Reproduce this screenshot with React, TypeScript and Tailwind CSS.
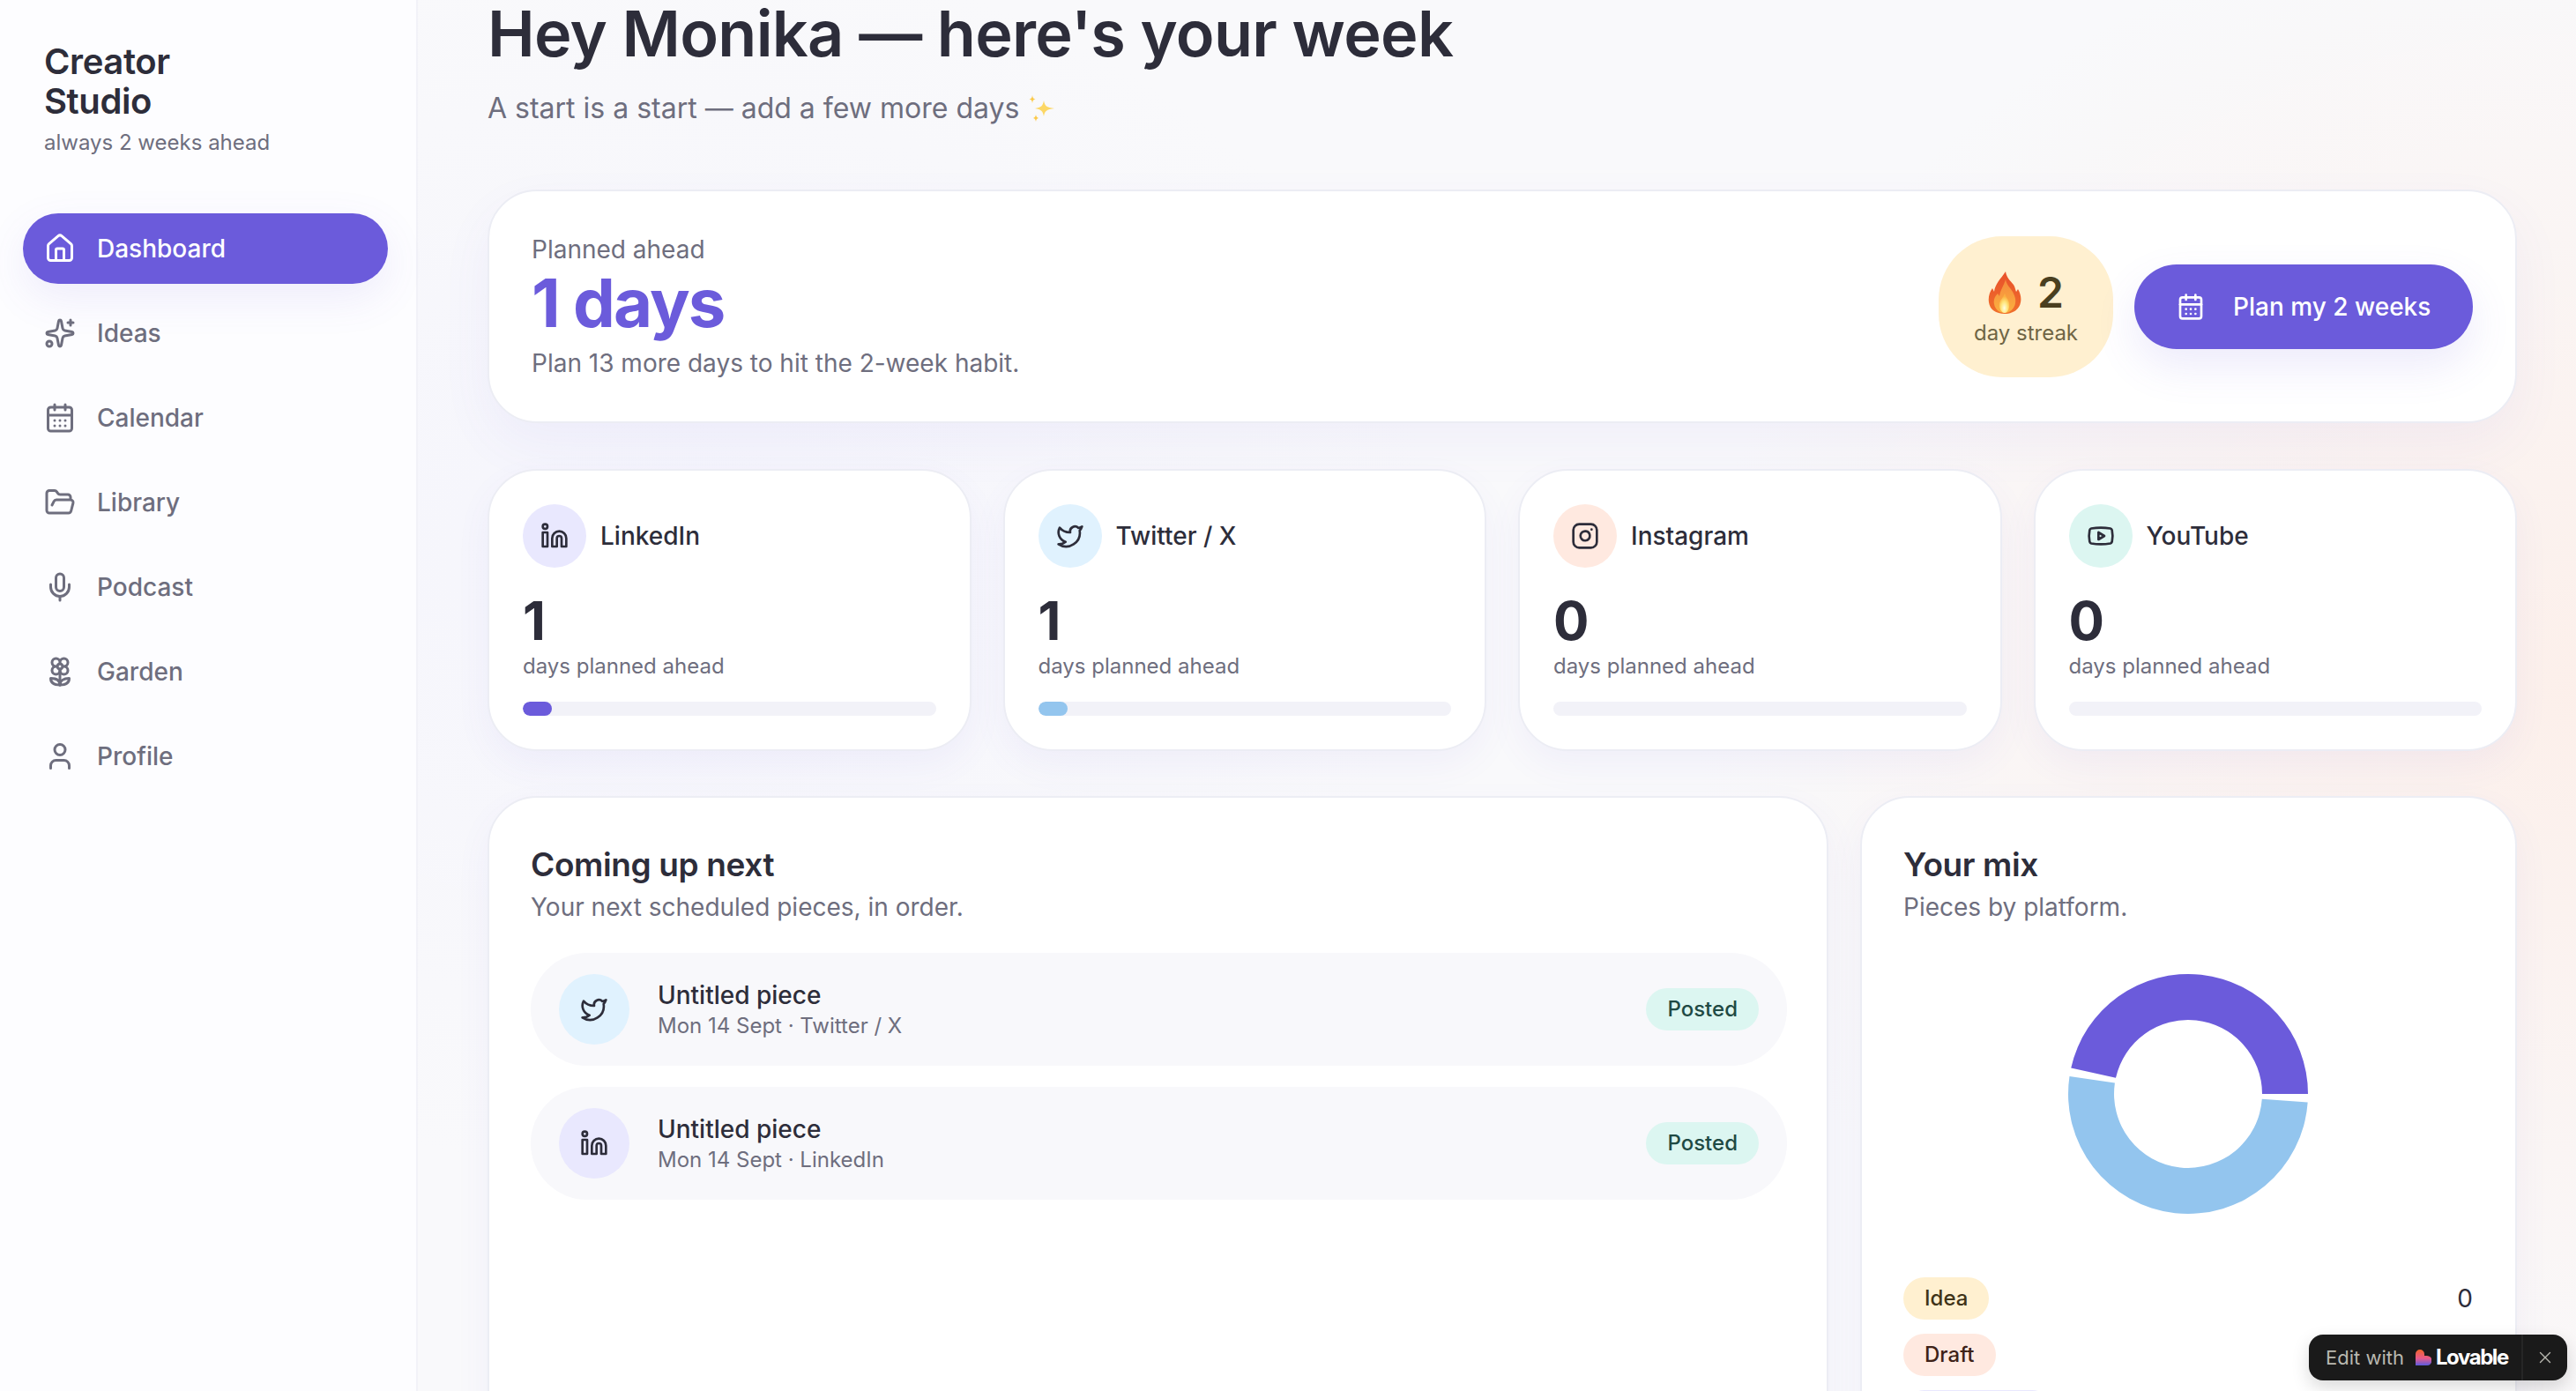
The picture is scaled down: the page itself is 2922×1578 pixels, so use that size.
import { CalendarDays, Flower2, FolderOpen, House, Instagram, Linkedin, Mic, Sparkles, Twitter, User, X, Youtube } from 'lucide-react';

const NAV = [
  { label: 'Dashboard', icon: House, active: true },
  { label: 'Ideas', icon: Sparkles },
  { label: 'Calendar', icon: CalendarDays },
  { label: 'Library', icon: FolderOpen },
  { label: 'Podcast', icon: Mic },
  { label: 'Garden', icon: Flower2 },
  { label: 'Profile', icon: User },
];

const PLATFORMS = [
  { name: 'LinkedIn', icon: Linkedin, tint: 'bg-[#e9e8fe]', count: 1, bar: 'bg-[#6b5bdb]' },
  { name: 'Twitter / X', icon: Twitter, tint: 'bg-[#e0f2fe]', count: 1, bar: 'bg-[#93c5ee]' },
  { name: 'Instagram', icon: Instagram, tint: 'bg-[#ffe9e0]', count: 0, bar: 'bg-[#6b5bdb]' },
  { name: 'YouTube', icon: Youtube, tint: 'bg-[#dcf6f1]', count: 0, bar: 'bg-[#6b5bdb]' },
];

const PIECES = [
  { meta: 'Mon 14 Sept · Twitter / X', icon: Twitter, tint: 'bg-[#e0f2fe]' },
  { meta: 'Mon 14 Sept · LinkedIn', icon: Linkedin, tint: 'bg-[#e9e8fe]' },
];

const MIX = [
  { label: 'Idea', tint: 'bg-[#fff0d0] text-[#3f3318]' },
  { label: 'Draft', tint: 'bg-[#ffe9e0] text-[#3e2218]' },
  { label: 'Scheduled', tint: 'bg-[#e9e8fe] text-[#2d2a55]' },
];

// angles go counter-clockwise from east, like the chart in the screenshot
function arc(from: number, to: number, r1: number, r2: number) {
  const pt = (a: number, r: number) => {
    const rad = (a * Math.PI) / 180;
    return `${(140 + r * Math.cos(rad)).toFixed(2)} ${(140 - r * Math.sin(rad)).toFixed(2)}`;
  };
  const large = to - from > 180 ? 1 : 0;
  return `M${pt(from, r1)}A${r1} ${r1} 0 ${large} 0 ${pt(to, r1)}L${pt(to, r2)}A${r2} ${r2} 0 ${large} 1 ${pt(from, r2)}Z`;
}

function Flame() {
  return (
    <svg viewBox="0 0 38 48" className="w-[38px] h-[48px] shrink-0">
      <defs>
        <linearGradient id="flameOuter" x1="0" y1="0" x2="0" y2="1">
          <stop offset="0" stopColor="#e8502a" />
          <stop offset="1" stopColor="#f0702c" />
        </linearGradient>
        <linearGradient id="flameInner" x1="0" y1="0" x2="0" y2="1">
          <stop offset="0" stopColor="#f58a3c" />
          <stop offset="1" stopColor="#fbb040" />
        </linearGradient>
        <radialGradient id="flameCore" cx="0.5" cy="0.75" r="0.6">
          <stop offset="0" stopColor="#fffde0" />
          <stop offset="0.55" stopColor="#ffe57a" />
          <stop offset="1" stopColor="#fbb040" />
        </radialGradient>
      </defs>
      <path d="M20 0c1 7 5 10 9 15 2 3 2 6 3 8l2-3c3 5 4 10 3 15-1 7-8 13-18 13S2 43 1 35c-1-6 1-12 4-16l2 4c1-9 7-14 13-23z" fill="url(#flameOuter)" />
      <path d="M20 9c1 6 5 9 8 14 2 4 4 8 3 13-1 6-6 11-12 11S8 43 7 37c-1-5 1-9 4-12l2 3c1-7 5-12 7-19z" fill="url(#flameInner)" />
      <path d="M19 25c1 4 4 6 5 10 1 5-1 12-5 12s-7-6-6-11c1-4 4-6 6-11z" fill="url(#flameCore)" />
    </svg>
  );
}

function Sparkle() {
  return (
    <svg viewBox="0 0 30 30" className="w-[30px] h-[30px] shrink-0">
      <path d="M18 6c1 6 3 8 12 9-9 1-11 3-12 9-1-6-3-8-10-9 7-1 9-3 10-9z" fill="#fcd765" />
      <path d="M5 0c.5 3 1 4 3.500 4.500C6 5 5.500 6 5 9c-.5-3-1-4-3.500-4.500C4 4 4.500 3 5 0z" fill="#fbc94a" />
      <path d="M9 22c.4 2.500 1 3 3 4-2 .5-2.600 1.500-3 4-.4-2.500-1-3.500-3-4 2-1 2.600-1.500 3-4z" fill="#fbc94a" />
    </svg>
  );
}

function LovableBadge() {
  return (
    <div className="absolute left-[2619px] top-[1514px] w-[293px] h-[52px] rounded-2xl bg-[#1a1a1a] flex items-center shadow-[0_8px_20px_rgba(0,0,0,0.15)]">
      <div className="flex items-center pl-[19px] w-[241px] shrink-0 whitespace-nowrap">
        <span className="text-[22px] leading-[32px] text-[#b9b8b0] shrink-0">Edit with</span>
        <svg viewBox="0 0 18 18" className="w-[18px] h-[18px] ml-[13px] shrink-0">
          <defs>
            <linearGradient id="lovable" x1="0" y1="0" x2="0" y2="1">
              <stop offset="0" stopColor="#f0642a" />
              <stop offset="0.55" stopColor="#e85a8a" />
              <stop offset="1" stopColor="#5a5be0" />
            </linearGradient>
          </defs>
          <path d="M0 5a5 5 0 0 1 10 0v2h3a5 5 0 0 1 0 11H0z" fill="url(#lovable)" />
        </svg>
        <span className="ml-[5px] text-[24px] leading-[32px] font-bold tracking-[-0.06em] text-white">Lovable</span>
      </div>
      <div className="h-full w-[2px] bg-[#262626]" />
      <div className="flex-1 flex items-center justify-center">
        <X className="w-[22px] h-[22px] text-[#b9b8b0]" strokeWidth={1.5} />
      </div>
    </div>
  );
}

export default function App() {
  return (
    <div className="relative w-[2922px] h-[1578px] overflow-hidden flex font-['Inter',sans-serif] text-[#2d2d3a] bg-[#f9f9fb] bg-[radial-gradient(ellipse_1000px_900px_at_100%_50%,rgba(255,230,218,0.5),transparent),radial-gradient(ellipse_900px_700px_at_25%_40%,rgba(236,236,255,0.3),transparent)]">
      {/* Sidebar */}
      <aside className="w-[474px] shrink-0 h-full bg-[#fdfdff] border-r-2 border-[#f2f2f8] pl-[26px] pr-[32px]">
        <div className="pl-[24px] pt-[47px]">
          <h2 className="text-[40px] leading-[45px] font-semibold tracking-[-0.01em]">Creator<br />Studio</h2>
          <p className="mt-[9px] text-[24px] leading-[32px] text-[#6e6e7e]">always 2 weeks ahead</p>
        </div>
        <nav className="mt-[64px] flex flex-col gap-4">
          {NAV.map(item => (
            <div key={item.label}
              className={`h-20 rounded-full flex items-center gap-6 pl-6 text-[28px] font-medium ${item.active ? 'bg-[#6b5bdb] text-white shadow-[0_16px_48px_rgba(107,91,219,0.10)]' : 'text-[#6e6e7e]'}`}>
              <item.icon className="w-9 h-9 shrink-0" />
              {item.label}
            </div>
          ))}
        </nav>
      </aside>

      {/* Main, scrolled down a little as in the screenshot */}
      <main className="flex-1 min-w-0 pl-[79px] pr-[67px]">
        <h1 className="-mt-[4px] text-[72px] leading-[84px] font-semibold tracking-[-0.01em] whitespace-nowrap">Hey Monika — here's your week</h1>
        <p className="mt-[19px] flex items-center gap-[10px] text-[32px] leading-[48px] text-[#6e6e7e]">
          A start is a start — add a few more days <Sparkle />
        </p>

        <section className="mt-[68px] h-[265px] rounded-[56px] bg-white border-2 border-[#ecedf4] shadow-[0_24px_60px_rgba(107,91,219,0.06)] flex items-center justify-between px-[48px]">
          <div>
            <p className="text-[28px] leading-[40px] text-[#6e6e7e]">Planned ahead</p>
            <p className="mt-[4px] text-[76px] leading-[72px] font-bold tracking-[-0.025em] text-[#6b5bdb]">1 days</p>
            <p className="mt-[13px] text-[28px] leading-[40px] text-[#6e6e7e]">Plan 13 more days to hit the 2-week habit.</p>
          </div>
          <div className="flex items-center gap-6">
            <div className="w-[198px] h-[160px] rounded-[72px] bg-[#fff0d0] flex flex-col items-center justify-center pt-[3px]">
              <div className="flex items-center gap-[18px]">
                <Flame />
                <span className="text-[48px] leading-[56px] font-semibold text-[#4a3f1f]">2</span>
              </div>
              <span className="mt-[2px] text-[24px] leading-[32px] text-[#6f6545]">day streak</span>
            </div>
            <button className="w-[384px] h-[96px] rounded-full bg-[#6b5bdb] text-white flex items-center gap-8 pl-12 text-[28px] font-medium shadow-[0_20px_48px_rgba(107,91,219,0.12)]">
              <CalendarDays className="w-8 h-8 shrink-0" />
              Plan my 2 weeks
            </button>
          </div>
        </section>

        <section className="mt-[52px] grid grid-cols-4 gap-9">
          {PLATFORMS.map(p => (
            <div key={p.name} className="h-[320px] rounded-[56px] bg-white border-2 border-[#ecedf4] shadow-[0_16px_40px_rgba(107,91,219,0.06)] p-[38px]">
              <div className="flex items-center gap-4">
                <div className={`w-[72px] h-[72px] rounded-full flex items-center justify-center ${p.tint}`}>
                  <p.icon className="w-8 h-8" />
                </div>
                <span className="text-[28px] leading-[40px] font-medium">{p.name}</span>
              </div>
              <p className="mt-[30px] text-[60px] leading-[60px] font-bold">{p.count}</p>
              <p className="mt-[6px] text-[24px] leading-[32px] text-[#6e6e7e]">days planned ahead</p>
              <div className="mt-[24px] h-4 rounded-full bg-[#f2f2f8] overflow-hidden">
                {p.count > 0 && <div className={`h-full w-[7.14%] rounded-full ${p.bar}`} />}
              </div>
            </div>
          ))}
        </section>

        <section className="mt-[51px] grid grid-cols-[1fr_745px] gap-9 items-start">
          <div className="h-[800px] rounded-[56px] bg-white border-2 border-[#ecedf4] shadow-[0_16px_40px_rgba(107,91,219,0.06)] pl-[47px] pr-[45px] pt-[50px]">
            <h3 className="text-[37px] leading-[52px] font-semibold tracking-[-0.01em]">Coming up next</h3>
            <p className="text-[28px] leading-[44px] text-[#6e6e7e]">Your next scheduled pieces, in order.</p>
            <div className="mt-[30px] flex flex-col gap-6">
              {PIECES.map(piece => (
                <div key={piece.meta} className="h-32 rounded-full bg-[#f8f8fb] flex items-center gap-8 px-8">
                  <div className={`w-20 h-20 rounded-full flex items-center justify-center shrink-0 ${piece.tint}`}>
                    <piece.icon className="w-8 h-8" />
                  </div>
                  <div className="flex-1">
                    <p className="text-[28px] leading-[38px] font-medium">Untitled piece</p>
                    <p className="text-[24px] leading-[32px] text-[#6e6e7e]">{piece.meta}</p>
                  </div>
                  <span className="h-12 px-6 rounded-full bg-[#dcf6f1] text-[#1f4a44] text-[24px] font-medium flex items-center">Posted</span>
                </div>
              ))}
            </div>
          </div>

          <div className="h-[800px] rounded-[56px] bg-white border-2 border-[#ecedf4] shadow-[0_16px_40px_rgba(107,91,219,0.06)] pl-[47px] pr-[48px] pt-[50px]">
            <h3 className="text-[37px] leading-[52px] font-semibold tracking-[-0.01em]">Your mix</h3>
            <p className="text-[28px] leading-[44px] text-[#6e6e7e]">Pieces by platform.</p>
            <div className="mt-[50px] flex justify-center">
              <svg viewBox="0 0 280 280" className="w-[280px] h-[280px]">
                <path d={arc(0, 167.5, 136, 84)} fill="#6b5bdb" />
                <path d={arc(171.5, 356, 136, 84)} fill="#93c5ee" />
              </svg>
            </div>
            <div className="mt-[68px] flex flex-col gap-4">
              {MIX.map(m => (
                <div key={m.label} className="flex items-center justify-between">
                  <span className={`h-12 px-6 rounded-full text-[24px] font-medium flex items-center ${m.tint}`}>{m.label}</span>
                  <span className="text-[28px]">0</span>
                </div>
              ))}
            </div>
          </div>
        </section>
      </main>

      <LovableBadge />
    </div>
  );
}
